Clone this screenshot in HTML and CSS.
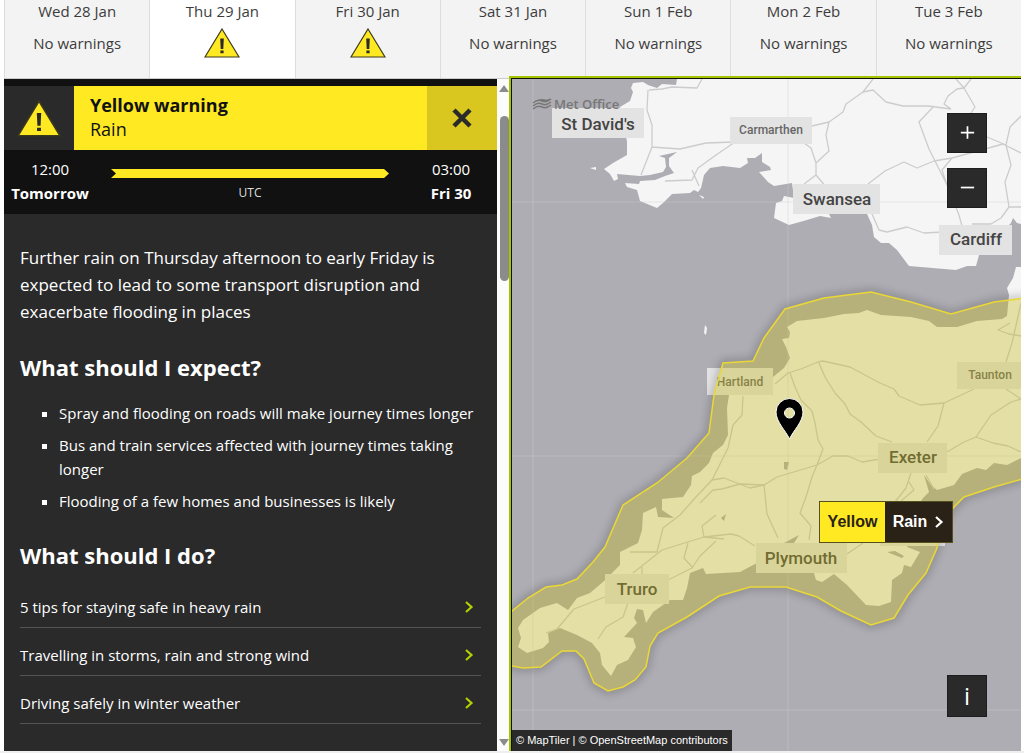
FILE: index.html
```html
<!DOCTYPE html>
<html lang="en">

<head>
    <meta charset="UTF-8">
    <meta name="viewport" content="width=device-width, initial-scale=1.0">
    <title>UK weather warnings</title>
    <link rel="stylesheet" href="styles.css">
</head>

<body>

    <!-- Shared icons -->
    <svg class="icon-defs" aria-hidden="true">
        <symbol id="icon-warning" viewBox="0 0 36 30">
            <path d="M18 1 L35 29 H1 Z" fill="#ffe923" stroke="#3d3a1c" stroke-width="1.2" />
            <path d="M16.2 10.5 h3.6 l-.5 10.5 h-2.6 z M16.4 22.5 h3.2 v2.7 h-3.2 z" fill="#2a2a2a" />
        </symbol>
        <symbol id="icon-chevron" viewBox="0 0 10 14">
            <path d="M2 2 L7.5 7 L2 12" fill="none" stroke="currentColor" stroke-width="2.2" />
        </symbol>
    </svg>

    <!-- Day Tabs -->
    <nav class="days">
        <button class="day"><span>Wed 28 Jan</span><span>No warnings</span></button>
        <button class="day active"><span>Thu 29 Jan</span><svg class="day-icon" role="img" aria-label="Yellow warning"><use href="#icon-warning" /></svg></button>
        <button class="day"><span>Fri 30 Jan</span><svg class="day-icon" role="img" aria-label="Yellow warning"><use href="#icon-warning" /></svg></button>
        <button class="day"><span>Sat 31 Jan</span><span>No warnings</span></button>
        <button class="day"><span>Sun 1 Feb</span><span>No warnings</span></button>
        <button class="day"><span>Mon 2 Feb</span><span>No warnings</span></button>
        <button class="day"><span>Tue 3 Feb</span><span>No warnings</span></button>
    </nav>

    <main class="content">

        <!-- Warning Details -->
        <section class="panel">
            <header class="warning-header">
                <div class="warning-icon"><svg><use href="#icon-warning" /></svg></div>
                <div class="warning-title">
                    <strong>Yellow warning</strong>
                    <span>Rain</span>
                </div>
                <button class="close" aria-label="Close">
                    <svg viewBox="0 0 22 22"><path d="M3 3 L19 19 M19 3 L3 19" stroke="#2a2a2a" stroke-width="4.5" /></svg>
                </button>
            </header>

            <div class="times">
                <div class="time"><span>12:00</span><strong>Tomorrow</strong></div>
                <div class="timeline">
                    <div class="bar"></div>
                    <span>UTC</span>
                </div>
                <div class="time"><span>03:00</span><strong>Fri 30</strong></div>
            </div>

            <div class="details">
                <p>Further rain on Thursday afternoon to early Friday is expected to lead to some transport disruption and exacerbate flooding in places</p>

                <h2>What should I expect?</h2>
                <ul class="expect">
                    <li>Spray and flooding on roads will make journey times longer</li>
                    <li>Bus and train services affected with journey times taking longer</li>
                    <li>Flooding of a few homes and businesses is likely</li>
                </ul>

                <h2>What should I do?</h2>
                <div class="links">
                    <a href="#">5 tips for staying safe in heavy rain <svg><use href="#icon-chevron" /></svg></a>
                    <a href="#">Travelling in storms, rain and strong wind <svg><use href="#icon-chevron" /></svg></a>
                    <a href="#">Driving safely in winter weather <svg><use href="#icon-chevron" /></svg></a>
                </div>
            </div>
        </section>

        <div class="scrollbar">
            <div class="arrow-up"></div>
            <div class="thumb"></div>
            <div class="arrow-down"></div>
        </div>

        <!-- Map -->
        <section class="map">
            <svg class="map-canvas" viewBox="512 79 509 672" preserveAspectRatio="xMinYMin slice">
                <defs>
                    <path id="warning-area" d="M1026 298 L994 302 L951 314 L911 302 L871 292 L824 298 L785 309 L764 338 L753 361 L723 363 L714 395 L709 433 L687 458 L657 483 L623 505 L605 547 L593 562 L577 579 L562 585 L546 587 L528 598 L506 616 V665 L523 668 L541 667 L562 651 L576 651 L584 659 L594 683 L608 691 L623 687 L635 680 L646 667 L650 646 L658 633 L687 617 L719 596 L750 587 L786 587 L817 597 L841 611 L871 625 L894 618 L908 595 L926 573 L937 548 L940 525 L954 507 L964 497 L994 487 L1026 478" />
                    <filter id="shadow-blur" x="-10%" y="-10%" width="120%" height="120%">
                        <feGaussianBlur stdDeviation="4" />
                    </filter>
                    <mask id="outside-area" maskUnits="userSpaceOnUse" x="500" y="60" width="540" height="700">
                        <rect x="500" y="60" width="540" height="700" fill="#fff" />
                        <use href="#warning-area" fill="#000" />
                    </mask>
                </defs>
                <rect class="sea" x="512" y="79" width="509" height="672" />

                <!-- South Wales -->
                <path class="land" d="M633 83 L643 82 L648 85 L657 88 L662 84 L676 85 L677 79 H1021 V224 L1017 223 L1013 218 L1011 223 L979 255 L976 266 L967 266 L956 270 L909 266 L897 250 L889 243 L881 243 L874 237 L872 225 L867 214 L829 214 L831 218 L820 216 L807 220 L789 225 L774 218 L776 203 L782 201 L784 196 L794 198 L792 183 L774 186 L768 182 L759 172 L771 170 L770 167 L762 162 L762 153 L755 158 L747 158 L748 163 L740 168 L723 166 L710 168 L704 175 L701 188 L698 192 L694 190 L690 193 L672 194 L663 203 L657 208 L640 201 L637 190 L627 187 L625 183 L639 184 L640 181 L655 180 L665 176 L674 173 L669 166 L669 158 L677 152 L659 156 L665 158 L666 167 L663 172 L650 175 L640 176 L617 174 L618 179 L614 181 L610 174 L604 169 L613 163 L627 155 L627 142 L625 130 L620 107 L630 101 L633 92 L631 88 Z" />
                <path class="land" d="M590 168 L596 167 L596 170 Z M699 195 L704 197 L703 199 Z M705 325 L707 328 L706 335 L704 333 Z" />
                <!-- South West England -->
                <path class="land" d="M1021 267 L1016 267 L1013 278 L1007 288 L1009 295 L1007 316 L1002 319 L977 321 L957 327 L937 327 L929 321 L911 317 L881 315 L867 310 L859 313 L844 314 L824 318 L797 321 L787 327 L790 332 L789 338 L782 339 L786 347 L790 358 L784 368 L773 377 L755 387 L729 395 L727 408 L728 435 L723 445 L713 453 L709 463 L700 472 L692 476 L691 485 L683 497 L662 499 L662 510 L674 518 L658 517 L656 507 L643 513 L642 530 L638 543 L620 552 L620 565 L603 582 L590 593 L577 598 L568 610 L557 603 L540 608 L523 620 L518 628 L521 638 L518 647 L527 653 L543 648 L549 642 L548 633 L560 628 L577 635 L592 643 L600 653 L602 665 L611 676 L617 665 L628 660 L636 647 L633 638 L624 637 L637 623 L634 618 L637 609 L643 610 L646 623 L653 612 L670 600 L683 600 L687 588 L690 573 L703 568 L706 574 L740 572 L757 563 L790 573 H814 L816 580 L822 582 L834 574 L847 585 L866 605 L879 606 L891 602 L892 580 L902 573 L904 565 L911 567 L920 552 L907 547 L912 515 L923 498 L929 492 L924 475 L931 485 L937 490 L954 485 L962 474 L977 468 L986 470 L994 463 L1007 465 L1021 458 Z" />
                <path class="inlet" d="M784 543 L799 535 L794 543 Z M887 552 L895 551 L904 556 L902 558 Z M784 462 L789 462 L787 470 L784 469 Z M721 518 L726 514 L724 521 Z" />

                <!-- Roads -->
                <g class="roads">
                    <path d="M649 90 L662 89 L672 87 L697 88 L702 79 M648 90 L647 110 L652 125 L652 147 L641 175 M652 147 L680 149 L706 143 L735 142 L716 155 L698 168 L692 180 L665 181 M692 170 L699 186" />
                    <path d="M873 79 L863 92 L846 104 L843 112 L829 122 L812 126 M829 122 L826 135 L829 151 L816 163 L816 175 L827 188 M816 163 L811 148 L804 143 M816 175 L804 184 M868 184 L885 171 L904 162 L917 168 L934 161 L952 158 L985 149 L1003 144 L1021 153" />
                    <path d="M863 92 L873 90 L886 102 L903 106 L928 106 L951 109 M951 109 L944 104 L948 96 L957 89 L964 88 L956 79 M964 88 L975 107 L971 113 M971 79 L964 88 M934 106 L919 122 L929 149 L947 185 L959 215 L962 226 M952 158 L942 170 L947 185 M987 137 L1006 145 L1011 165 L1005 182 L1009 207 L1001 218 L991 224 L972 224 M1009 207 L1021 207 M1006 145 L1010 127 L1021 116" />
                    <path d="M872 214 L879 230 L887 232 L907 227 L924 233 L943 232" />
                    <path d="M775 384 L788 373 L801 369 L818 362 L823 361 L850 367 L880 383 L894 389 L899 396 L920 405 L944 403 L974 389 M819 363 L825 377 L835 393 L845 404 L850 414 L861 422 L876 436 L892 442 M944 403 L938 426 L927 442" />
                    <path d="M790 373 L795 387 L801 400 L812 411 L815 423 L818 440 L823 449 L817 465 L812 477 L806 497 L800 513 L811 526 L809 540 M700 503 L713 490 L722 489 L740 484 L764 485 L777 477 L817 465 L833 456 L848 456 L862 462 L880 459" />
                    <path d="M743 396 L742 415 L733 425 L728 448 L712 480 L695 498 L680 515 L663 528 L657 552 L630 552 M712 480 L724 478 L750 488 L764 485 L767 514 L778 538 M724 539 L704 537 L662 550 L633 573 M704 537 L702 526 L716 515 M704 537 L731 534 L739 536 L755 546 M716 541 L700 556 L692 568 L668 580 M688 543 L684 558 L693 568 M605 597 L574 609 L557 629 L546 633 M642 567 V580 L628 603 L623 617 L606 627 L598 639" />
                    <path d="M947 452 L964 442 L976 437 L993 443 L1008 446 L1021 452 M976 437 L991 415 L1011 402 L1021 399 M1006 362 L1012 343 L1015 330 L1021 303 M1010 323 L998 330 L1009 334 L1021 336 M1006 389 L1021 399 M911 473 L906 488 L895 502 M909 482 L914 490 L901 501 M926 475 L934 489 M847 554 L863 543" />
                </g>

                <!-- Grid -->
                <path class="grid" d="M533 79 V751 M788 79 V751 M512 202 H1021 M512 456 H1021 M512 710 H1021" />

                <!-- Place names -->
                <g class="places">
                    <rect x="552" y="108" width="92" height="30" />
                    <text x="598" y="130">St David's</text>
                    <rect x="793" y="184" width="87" height="30" />
                    <text x="837" y="205">Swansea</text>
                    <rect x="939" y="225" width="73" height="30" />
                    <text x="976" y="245">Cardiff</text>
                    <rect x="878" y="443" width="69" height="30" />
                    <text x="913" y="463">Exeter</text>
                    <rect x="756" y="543" width="91" height="30" />
                    <text x="801" y="564">Plymouth</text>
                    <rect x="605" y="574" width="64" height="30" />
                    <text x="637" y="595">Truro</text>
                    <rect x="880" y="540" width="65" height="6" />
                </g>
                <g class="places small">
                    <rect x="730" y="117" width="82" height="27" />
                    <text x="771" y="134">Carmarthen</text>
                    <rect x="707" y="368" width="66" height="27" />
                    <text x="740" y="386">Hartland</text>
                    <rect x="957" y="362" width="64" height="27" />
                    <text x="990" y="379">Taunton</text>
                </g>

                <!-- Watermark -->
                <g class="watermark">
                    <path d="M533 103 q5 -4 9 -2 t9 -2 M533 106 q5 -4 9 -2 t9 -2 M533 109 q5 -4 9 -2 t9 -2 M537 101 q4 -2 7 -1 t6 -1" />
                    <text x="554" y="109">Met Office</text>
                </g>

                <!-- Warning area -->
                <g mask="url(#outside-area)">
                    <use class="area-shadow" href="#warning-area" />
                </g>
                <use class="area" href="#warning-area" />

                <!-- Selected location -->
                <path class="pin" fill-rule="evenodd" d="M789.500 439 C786 431 776 422 776 412 A13.500 13.500 0 0 1 803 412 C803 422 793 431 789.500 439 Z M789.500 408 a5 5 0 1 0 .01 0 Z" />
            </svg>

            <button class="map-warning">
                <span class="level">Yellow</span>
                <span class="type">Rain <svg><use href="#icon-chevron" /></svg></span>
            </button>

            <div class="map-controls">
                <button aria-label="Zoom in"><svg viewBox="0 0 40 40"><path d="M13.500 19.500 H27.500 M20.500 13 V26" /></svg></button>
                <button aria-label="Zoom out"><svg viewBox="0 0 40 40"><path d="M13.500 19.500 H27.500" /></svg></button>
                <button class="info" aria-label="Map information">i</button>
            </div>

            <div class="attribution"><a href="#">© MapTiler</a> | <a href="#">© OpenStreetMap contributors</a></div>
        </section>

    </main>

</body>

</html>
```
FILE: styles.css
```css
* {
    box-sizing: border-box;
}

body {
    font-family: "Open Sans", "Noto Sans", sans-serif;
    font-size: 15px;
    margin: 0;
    padding: 0 3px 0 4px;
    border-bottom: 2px solid #efefef;
    height: 100vh;
    min-height: 740px;
    display: flex;
    flex-direction: column;
    background-color: #ffffff;
}

button {
    font: inherit;
    margin: 0;
    padding: 0;
    border: none;
    cursor: pointer;
}

.icon-defs {
    position: absolute;
    width: 0;
    height: 0;
}

/* Day tabs */
.days {
    display: grid;
    grid-template-columns: repeat(7, 1fr);
    height: 79px;
    border-bottom: 1px solid #cccccc;
}

.day {
    display: flex;
    flex-direction: column;
    justify-content: flex-start;
    align-items: center;
    gap: 10px;
    line-height: 22px;
    color: #3c3c3c;
    background-color: #f3f3f3;
    border-left: 1px solid #dddddd;
}

.day.active {
    background-color: #ffffff;
}

.day-icon {
    width: 36px;
    height: 30px;
    margin-top: -4px;
}

/* Main area */
.content {
    flex: 1;
    min-height: 0;
    display: grid;
    grid-template-columns: minmax(0, 493fr) 12px minmax(0, 512fr);
}

.panel {
    overflow: hidden;
    background-color: #2a2a2a;
    border-top: 7px solid #111111;
    color: #ffffff;
}

.warning-header {
    display: flex;
    height: 64px;
    background-color: #ffe923;
}

.warning-icon,
.close {
    width: 70px;
    display: flex;
    align-items: center;
    justify-content: center;
}

.warning-icon {
    background-color: #2a2a2a;
}

.warning-icon svg {
    width: 44px;
    height: 37px;
}

.warning-title {
    flex: 1;
    padding: 7px 0 0 16px;
    display: flex;
    flex-direction: column;
    font-size: 18px;
    line-height: 24px;
    color: #111111;
}

.close {
    background-color: #d9c61e;
}

.close svg {
    width: 22px;
    height: 22px;
}

.times {
    display: flex;
    height: 64px;
    background-color: #111111;
    line-height: 24px;
    padding-top: 7px;
}

.time {
    width: 92px;
    display: flex;
    flex-direction: column;
    align-items: center;
}

.timeline {
    flex: 1;
    display: flex;
    flex-direction: column;
    align-items: center;
    padding: 12px 16px 0 15px;
    font-size: 12px;
}

.timeline span {
    margin-top: 3px;
    color: #dddddd;
}

.bar {
    width: 100%;
    height: 9px;
    background-color: #ffe923;
    clip-path: polygon(0 0, calc(100% - 5px) 0, 100% 50%, calc(100% - 5px) 100%, 0 100%, 5px 50%);
}

.details {
    padding: 30px 16px 0;
}

.details p {
    margin: 0;
    font-size: 17px;
    line-height: 27px;
}

h2 {
    margin: 28px 0 20px;
    font-size: 22px;
    line-height: 28px;
}

.expect {
    list-style: square;
    margin: 0;
    padding-left: 39px;
    line-height: 24px;
}

.expect li {
    margin-bottom: 8px;
}

.links {
    display: flex;
    flex-direction: column;
    gap: 15px;
    padding-top: 6px;
}

.links a {
    display: flex;
    justify-content: space-between;
    align-items: center;
    padding-bottom: 8px;
    border-bottom: 1px solid #555555;
    line-height: 24px;
    color: #ffffff;
    text-decoration: none;
}

.links svg {
    width: 10px;
    height: 14px;
    margin-right: 7px;
    color: #b4d000;
}

/* Scrollbar */
.scrollbar {
    display: flex;
    flex-direction: column;
    align-items: center;
    padding: 6px 0 5px 2px;
    background-color: #fcfcfc;
}

.thumb {
    width: 9px;
    height: 25%;
    margin: 24px 0 auto;
    border-radius: 5px;
    background-color: #8b8b8b;
}

.arrow-up,
.arrow-down {
    border: 5px solid transparent;
}

.arrow-up {
    border-top-width: 0;
    border-bottom: 7px solid #8b8b8b;
}

.arrow-down {
    border-bottom-width: 0;
    border-top: 7px solid #8b8b8b;
}

/* Map */
.map {
    position: relative;
    margin-top: -3px;
    border-top: 2px solid #a4c400;
    border-left: 2px solid #a4c400;
    box-shadow: inset 1px 1px 0 #111111;
    padding: 1px 0 0 1px;
    min-height: 0;
}

.map-canvas {
    display: block;
    width: 100%;
    height: 100%;
}

.sea,
.inlet {
    fill: #aeadb3;
}

.land {
    fill: #f5f5f5;
}

.roads {
    fill: none;
    stroke: #cccccc;
    stroke-width: 1.3;
    stroke-linejoin: round;
}

.grid {
    fill: none;
    stroke: #d0d0d0;
    stroke-opacity: 0.4;
}

.places rect {
    fill: #e3e3e3;
}

.places text {
    font-family: Roboto, sans-serif;
    font-size: 17px;
    font-weight: 500;
    text-anchor: middle;
    fill: #444444;
}

.places.small text {
    font-size: 12px;
    fill: #666666;
}

.watermark text {
    font-family: "Open Sans", sans-serif;
    font-size: 13px;
    font-weight: 600;
    fill: #777777;
}

.watermark path {
    fill: none;
    stroke: #777777;
    stroke-width: 1.5;
}

.area {
    fill: #c5b610;
    fill-opacity: 0.35;
    stroke: #ead835;
    stroke-width: 1.5;
}

.area-shadow {
    fill: none;
    stroke: #000000;
    stroke-opacity: 0.35;
    stroke-width: 4;
    filter: url(#shadow-blur);
}

.pin {
    fill: #000000;
    stroke: #ffffff;
    stroke-width: 1;
}

.map-warning {
    position: absolute;
    top: 423px;
    left: 308px;
    display: flex;
    height: 42px;
    border: 1px solid #55501c;
    font-family: "Liberation Sans", Arial, sans-serif;
    font-size: 16px;
    font-weight: bold;
    line-height: 40px;
}

.level {
    width: 65px;
    background-color: #ffe923;
    color: #2b2217;
}

.type {
    width: 67px;
    display: flex;
    align-items: center;
    justify-content: center;
    gap: 7px;
    background-color: #2b2217;
    color: #ffffff;
}

.type svg {
    width: 10px;
    height: 14px;
}

.map-controls {
    position: absolute;
    top: 35px;
    right: 34px;
    bottom: 34px;
    display: flex;
    flex-direction: column;
    gap: 15px;
}

.map-controls button {
    width: 40px;
    height: 40px;
    background-color: #2a2a2a;
    border: 1px solid #1d1d1d;
    color: #ffffff;
}

.map-controls svg {
    display: block;
    stroke: #ffffff;
    stroke-width: 1.8;
}

.map-controls .info {
    margin-top: auto;
    height: 42px;
    font-size: 24px;
    line-height: 36px;
}

.attribution {
    position: absolute;
    left: 1px;
    bottom: 0;
    padding: 0 4px;
    background-color: #2a2a2a;
    font-family: "Liberation Sans", Arial, sans-serif;
    font-size: 11px;
    line-height: 21px;
    color: #ffffff;
}

.attribution a {
    color: #ffffff;
    text-decoration: none;
}
```
